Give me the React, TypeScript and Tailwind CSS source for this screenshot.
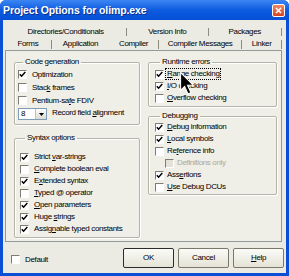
import React from "react";

const font = "font-['Liberation_Sans',Arial,sans-serif] text-[8px] leading-[10px] tracking-[-0.35px] text-black";

const Check: React.FC<{ checked?: boolean; disabled?: boolean }> = ({ checked, disabled }) => (
  <span
    className={`w-[9px] h-[9px] shrink-0 border border-t-[#7f7d73] border-l-[#7f7d73] border-b-white border-r-white flex items-center justify-center ${
      disabled ? "bg-[#e4e2d8]" : "bg-white"
    }`}
  >
    {checked && (
      <svg width="7" height="7" viewBox="0 0 7 7">
        <path d="M0.8 3.2 L2.6 5.2 L6.3 1" fill="none" stroke="#000" strokeWidth="1.5" />
      </svg>
    )}
  </span>
);

// label with one underlined accelerator letter
const Acc: React.FC<{ text: string; at?: number }> = ({ text, at }) =>
  at === undefined ? (
    <>{text}</>
  ) : (
    <>
      {text.slice(0, at)}
      <span className="underline underline-offset-1">{text[at]}</span>
      {text.slice(at + 1)}
    </>
  );

const Row: React.FC<{
  label: string;
  at?: number;
  checked?: boolean;
  disabled?: boolean;
  gap?: string;
  focus?: boolean;
}> = ({ label, at, checked, disabled, gap = "gap-[5px]", focus }) => (
  <div className={`h-[12px] flex items-center ${gap}`}>
    <Check checked={checked} disabled={disabled} />
    <span
      className={`whitespace-nowrap ${disabled ? "text-[#aca899]" : ""} ${
        focus ? "outline outline-1 outline-dotted outline-black px-[1px] -mx-[1px]" : ""
      }`}
    >
      <Acc text={label} at={at} />
    </span>
  </div>
);

const Group: React.FC<{ title: string; className: string; children: React.ReactNode }> = ({
  title,
  className,
  children,
}) => (
  <fieldset
    className={`border border-[#b6b4a6] rounded-[2px] shadow-[inset_1px_1px_0_#fff,1px_1px_0_#fff] ${className}`}
  >
    <legend className="ml-[5px] px-[2px] leading-[10px]">{title}</legend>
    {children}
  </fieldset>
);

const Btn: React.FC<{ children: React.ReactNode; def?: boolean }> = ({ children, def }) => (
  <button
    className={`w-[51px] h-[20px] rounded-[2px] border ${
      def ? "border-[#2b2b2b]" : "border-[#7a7868]"
    } bg-gradient-to-b from-[#fbfbf8] to-[#e5e3d6] flex items-center justify-center`}
  >
    {children}
  </button>
);

export default function App() {
  return (
    <div className={`w-[289px] h-[276px] bg-[#0a4fd6] flex flex-col rounded-t-[6px] overflow-hidden ${font}`}>
      {/* title bar */}
      <div className="h-[20px] shrink-0 flex items-center justify-between pl-[3px] pr-[4px] bg-gradient-to-b from-[#3b86f2] via-[#0c5be0] to-[#0650d6]">
        <span className="font-['Liberation_Sans',Arial,sans-serif] font-bold text-[10.5px] tracking-[-0.1px] text-white [text-shadow:1px_1px_0_#0a2f8a]">
          Project Options for olimp.exe
        </span>
        <span className="w-[13px] h-[13px] rounded-[2px] border border-white bg-gradient-to-b from-[#f08a66] to-[#d8401c] flex items-center justify-center">
          <svg width="7" height="7" viewBox="0 0 7 7">
            <path d="M1 1 L6 6 M6 1 L1 6" stroke="#fff" strokeWidth="1.6" />
          </svg>
        </span>
      </div>

      {/* dialog body */}
      <div className="flex-1 mx-[3px] mb-[3px] bg-[#ecebe3] flex flex-col">
        {/* tabs */}
        <div className="pt-[5px] pl-[2px] pr-[4px]">
          <div className="h-[13px] flex items-center">
            <span className="w-[122px] text-center">Directories/Conditionals</span>
            <span className="w-px h-[8px] bg-[#8d8b7e]" />
            <span className="w-[81px] text-center">Version Info</span>
            <span className="w-px h-[8px] bg-[#8d8b7e]" />
            <span className="w-[73px] text-center">Packages</span>
            <span className="w-px h-[8px] bg-[#8d8b7e]" />
          </div>
          <div className="h-[12px] flex items-center">
            <span className="w-[46px] text-center">Forms</span>
            <span className="w-px h-[9px] bg-[#8d8b7e]" />
            <span className="w-[58px] text-center">Application</span>
            <span className="w-[49px] text-center">Compiler</span>
            <span className="w-px h-[9px] bg-[#8d8b7e]" />
            <span className="w-[83px] text-center">Compiler Messages</span>
            <span className="w-px h-[9px] bg-[#8d8b7e]" />
            <span className="w-[39px] text-center">Linker</span>
            <span className="w-px h-[9px] bg-[#8d8b7e]" />
          </div>
        </div>

        {/* tab page */}
        <div className="relative ml-[2px] mr-[4px] h-[192px] border border-[#919b9c] bg-[#efeee7] flex gap-[8px] pl-[8px] pt-[6px]">
          <div className="w-[126px] flex flex-col gap-[8px]">
            <Group title="Code generation" className="h-[68px] pl-[3px]">
              <div className="pt-[1px]">
                <div className="h-[13px] flex items-center gap-[5px]">
                  <Check checked />
                  <span>Optimization</span>
                </div>
                <div className="h-[13px] flex items-center gap-[5px]">
                  <Check />
                  <span>
                    <Acc text="Stack frames" at={4} />
                  </span>
                </div>
                <div className="h-[13px] flex items-center gap-[5px]">
                  <Check />
                  <span>
                    <Acc text="Pentium-safe FDIV" at={10} />
                  </span>
                </div>
                <div className="mt-[1px] h-[12px] flex items-center gap-[5px]">
                  <div className="w-[29px] h-[12px] bg-white border border-[#7f9db9] flex items-center justify-between pl-[2px]">
                    <span>8</span>
                    <span className="w-[11px] h-[10px] bg-gradient-to-b from-[#fdfdfb] to-[#dcdad0] border-l border-[#c3c1b5] flex items-center justify-center">
                      <svg width="5" height="3" viewBox="0 0 5 3">
                        <path d="M0 0 H5 L2.5 3 Z" fill="#000" />
                      </svg>
                    </span>
                  </div>
                  <span className="-mt-[3px]">
                    <Acc text="Record field alignment" at={13} />
                  </span>
                </div>
              </div>
            </Group>
            <Group title="Syntax options" className="h-[105px] pl-[5px]">
              <div className="pt-[8px]">
                <Row label="Strict var-strings" at={7} checked />
                <Row label="Complete boolean eval" at={0} />
                <Row label="Extended syntax" at={1} checked />
                <Row label="Typed @ operator" at={0} />
                <Row label="Open parameters" at={0} checked />
                <Row label="Huge strings" at={5} checked />
                <Row label="Assignable typed constants" at={5} checked />
              </div>
            </Group>
          </div>

          <div className="w-[129px] flex flex-col gap-[4px]">
            <Group title="Runtime errors" className="h-[50px] pl-[6px]">
              <div className="pt-[1px]">
                <Row label="Range checking" at={0} checked gap="gap-[3px]" focus />
                <Row label="I/O checking" at={0} checked gap="gap-[3px]" />
                <Row label="Overflow checking" at={0} gap="gap-[3px]" />
              </div>
            </Group>
            <Group title="Debugging" className="h-[84px] pl-[6px]">
              <Row label="Debug information" at={0} checked gap="gap-[3px]" />
              <Row label="Local symbols" at={0} checked gap="gap-[3px]" />
              <Row label="Reference info" at={2} gap="gap-[3px]" />
              <div className="pl-[10px]">
                <Row label="Definitions only" disabled gap="gap-[3px]" />
              </div>
              <Row label="Assertions" at={3} checked gap="gap-[3px]" />
              <Row label="Use Debug DCUs" at={0} gap="gap-[3px]" />
            </Group>
          </div>

          {/* mouse pointer */}
          <svg
            className="absolute left-[174px] top-[21px]"
            width="15"
            height="23"
            viewBox="0 0 13 20"
          >
            <path d="M0.5 0.5 V16 L4 12.5 L7 19 L9.5 18 L6.5 11.5 H11.5 Z" fill="#000" stroke="#fff" strokeWidth="0.9" />
          </svg>
        </div>

        {/* bottom bar */}
        <div className="flex-1 flex items-center pl-[8px] pr-[2px]">
          <div className="flex items-center gap-[5px] mt-[4px]">
            <Check />
            <span>Default</span>
          </div>
          <div className="ml-auto flex gap-[4px]">
            <Btn def>OK</Btn>
            <Btn>Cancel</Btn>
            <Btn>
              <Acc text="Help" at={0} />
            </Btn>
          </div>
        </div>
      </div>
    </div>
  );
}
